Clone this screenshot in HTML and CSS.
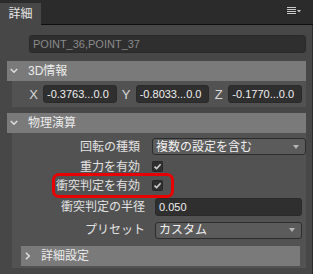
FILE: index.html
```html
<!DOCTYPE html>
<html>
<head>
  <title>詳細</title>
  <link rel="stylesheet" href="styles.css">
</head>
<body>

  <!-- Tab bar -->
  <div class="tabbar">
    <div class="tab">詳細</div>
    <div class="tabfill">
      <svg class="menu" width="15" height="8" viewBox="0 0 15 8">
        <rect x="0" y="0" width="9" height="1" fill="#c8c8c8"/>
        <rect x="0" y="2" width="9" height="1" fill="#c8c8c8"/>
        <rect x="0" y="4" width="9" height="1" fill="#c8c8c8"/>
        <rect x="0" y="6" width="9" height="1" fill="#c8c8c8"/>
        <polygon points="10,3 14,3 12,5.5" fill="#c8c8c8"/>
      </svg>
    </div>
  </div>

  <div class="panel">
    <div class="namefield">POINT_36,POINT_37</div>

    <!-- 3D info -->
    <div class="section">
      <div class="sechead">
        <svg class="chev" width="8" height="6" viewBox="0 0 8 6"><polyline points="0.8,1 4,4.2 7.2,1" fill="none" stroke="#dcdcdc" stroke-width="1.6"/></svg>
        <span>3D情報</span>
      </div>
      <div class="secbody xyz">
        <span class="axis">X</span><div class="num">-0.3763...0.0</div>
        <span class="axis">Y</span><div class="num">-0.8033...0.0</div>
        <span class="axis">Z</span><div class="num">-0.1770...0.0</div>
      </div>
    </div>

    <!-- Physics -->
    <div class="section second">
      <div class="sechead">
        <svg class="chev" width="8" height="6" viewBox="0 0 8 6"><polyline points="0.8,1 4,4.2 7.2,1" fill="none" stroke="#dcdcdc" stroke-width="1.6"/></svg>
        <span>物理演算</span>
      </div>
      <div class="secbody props">
        <div class="row r1">
          <div class="label">回転の種類</div>
          <div class="select"><span>複数の設定を含む</span><span class="arrow"></span></div>
        </div>
        <div class="row r2">
          <div class="label">重力を有効</div>
          <svg class="check" width="11" height="11" viewBox="0 0 11 11"><rect x="0.5" y="0.5" width="10" height="10" rx="1" fill="#2f2f2f" stroke="#272727"/><polyline points="2.5,5.6 4.6,7.6 8.6,3.2" fill="none" stroke="#cfcfcf" stroke-width="1.5"/></svg>
        </div>
        <div class="row r3">
          <div class="label">衝突判定を有効</div>
          <svg class="check" width="11" height="11" viewBox="0 0 11 11"><rect x="0.5" y="0.5" width="10" height="10" rx="1" fill="#2f2f2f" stroke="#272727"/><polyline points="2.5,5.6 4.6,7.6 8.6,3.2" fill="none" stroke="#cfcfcf" stroke-width="1.5"/></svg>
          <div class="highlight"></div>
        </div>
        <div class="row r4 wide">
          <div class="label">衝突判定の半径</div>
          <div class="num">0.050</div>
        </div>
        <div class="row r5 wide">
          <div class="label">プリセット</div>
          <div class="select"><span>カスタム</span><span class="arrow"></span></div>
        </div>
        <div class="subhead">
          <svg class="chev" width="6" height="8" viewBox="0 0 6 8"><polyline points="1,0.8 4.2,4 1,7.2" fill="none" stroke="#dcdcdc" stroke-width="1.6"/></svg>
          <span>詳細設定</span>
        </div>
      </div>
    </div>
  </div>

</body>
</html>
```

FILE: styles.css
```css
body {
  margin: 0;
  background: #2b2b2b;
  font-family: "Liberation Sans", "Noto Sans CJK JP", sans-serif;
  font-size: 12px;
  color: #e6e6e6;
}
.tabbar {
  display: flex;
  height: 25px;
}
.tab {
  width: 41px;
  margin-top: 3px;
  background: #474747;
  display: flex;
  align-items: center;
  justify-content: center;
  color: #e8e8e8;
  line-height: 14px;
}
.tabfill {
  flex: 1;
  border-bottom: 1px solid #0f0f0f;
  display: flex;
  justify-content: flex-end;
  align-items: flex-start;
  padding: 7px 11px 0 0;
}
.panel {
  background: #474747;
  margin-right: 1px;
  height: 249px;
  padding: 10px 6px 0 7px;
  box-sizing: border-box;
}
.namefield {
  margin-left: 22px;
  height: 18px;
  background: #2f2f2f;
  border: 1px solid #2a2a2a;
  border-radius: 3px;
  box-sizing: border-box;
  color: #8a8a8a;
  font-size: 11px;
  line-height: 16px;
  padding-left: 3px;
}
.section {
  margin-top: 8px;
}
.section.second {
  margin-top: 6px;
}
.sechead, .subhead {
  height: 20px;
  background: #7a7a7a;
  display: flex;
  align-items: center;
  padding-left: 3px;
  color: #ececec;
  line-height: 14px;
}
.sechead .chev {
  margin-right: 10px;
}
.secbody {
  margin-left: 5px;
  background: #525252;
}
.xyz {
  display: flex;
  align-items: center;
  height: 26px;
  padding: 0 4px 0 12px;
}
.axis {
  width: 19px;
  text-align: center;
  color: #d8d8d8;
  font-size: 13px;
}
.num {
  flex: 1;
  min-width: 0;
  height: 18px;
  background: #2f2f2f;
  border: 1px solid #2a2a2a;
  border-radius: 3px;
  box-sizing: border-box;
  overflow: hidden;
  white-space: nowrap;
  font-size: 11px;
  line-height: 16px;
  padding-left: 3px;
  color: #f0f0f0;
}
.props {
  padding: 3px 0 2px;
}
.row {
  display: flex;
  align-items: center;
  position: relative;
  height: 21px;
}
.row.r2, .row.r3 {
  height: 19px;
}
.row.r4 {
  height: 23px;
}
.row.r5 {
  height: 24px;
}
.label {
  width: 128px;
  padding-right: 12px;
  text-align: right;
  color: #e2e2e2;
  line-height: 14px;
}
.row.wide .label {
  width: 133px;
  padding-right: 10px;
}
.row.wide .num, .row.wide .select {
  margin-right: 4px;
}
.select {
  flex: 1;
  height: 17px;
  background: #5b5b5b;
  border: 1px solid #2c2c2c;
  border-radius: 3px;
  box-sizing: border-box;
  display: flex;
  align-items: center;
  justify-content: space-between;
  padding: 0 6px 0 3px;
  color: #f0f0f0;
  line-height: 14px;
}
.arrow {
  width: 0;
  height: 0;
  border-left: 3px solid transparent;
  border-right: 3px solid transparent;
  border-top: 4px solid #b4b4b4;
}
.check {
  display: block;
}
.highlight {
  position: absolute;
  left: 40px;
  top: -3px;
  width: 122px;
  height: 25px;
  border: 3px solid #e80000;
  border-radius: 7px;
  box-sizing: border-box;
}
.subhead {
  margin: 4px 6px 0 9px;
  padding-left: 4px;
}
.subhead .chev {
  margin-right: 10px;
}
```
